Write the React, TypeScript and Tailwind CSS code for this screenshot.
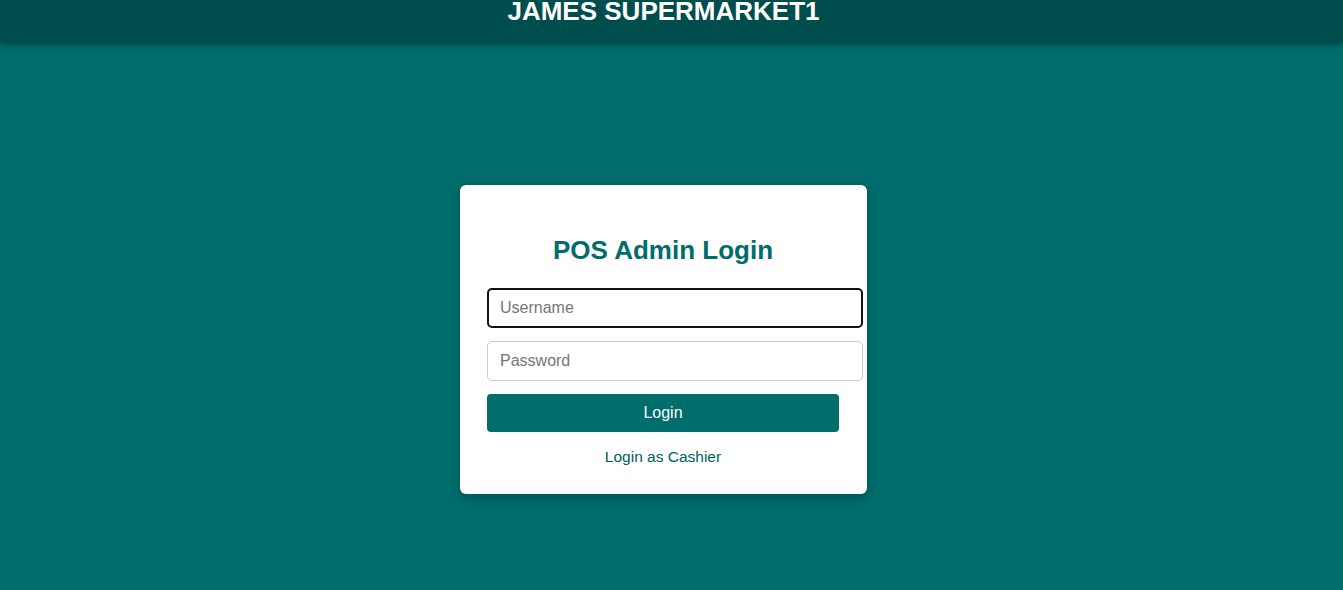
const font = { fontFamily: '"Liberation Sans", Arial, sans-serif' };

const Header = () => (
  <header className="h-[43px] bg-[#004d4d] shadow-[0_2px_6px_rgba(0,0,0,0.35)] flex justify-center pr-[16px] relative z-10">
    <h1 className="text-white font-bold text-[26px] leading-[30px] -mt-[4px]">
      JAMES SUPERMARKET1
    </h1>
  </header>
);

const LoginCard = () => (
  <div className="w-[407px] bg-white rounded-[6px] shadow-[0_4px_12px_rgba(0,0,0,0.25)] pl-[27px] pr-[28px] pt-[50px] pb-[28px]">
    <h2 className="text-[#006d6d] font-bold text-[26px] leading-[30px] text-center">
      POS Admin Login
    </h2>
    <form className="mt-[23px]" onSubmit={(e) => e.preventDefault()}>
      {/* focused field */}
      <input
        type="text"
        placeholder="Username"
        className="block w-[376px] h-[40px] px-[11px] border-2 border-[#111] rounded-[5px] text-[16px] text-black placeholder:text-[#767676] outline-none"
      />
      <input
        type="password"
        placeholder="Password"
        className="block w-[376px] h-[40px] mt-[13px] px-[12px] border border-[#cccccc] rounded-[5px] text-[16px] text-black placeholder:text-[#767676] outline-none"
      />
      <button
        type="submit"
        className="block w-[352px] h-[38px] mt-[13px] bg-[#006d6d] text-white text-[16px] rounded-[4px]"
      >
        Login
      </button>
    </form>
    <p className="mt-[16px] text-center text-[15.5px] leading-[18px] text-[#005f5f]">
      Login as Cashier
    </p>
  </div>
);

export default function App() {
  return (
    <div className="min-h-[590px] bg-[#006d6d]" style={font}>
      <Header />
      <main className="flex justify-center pr-[16px] pt-[142px] pb-[96px]">
        <LoginCard />
      </main>
    </div>
  );
}
